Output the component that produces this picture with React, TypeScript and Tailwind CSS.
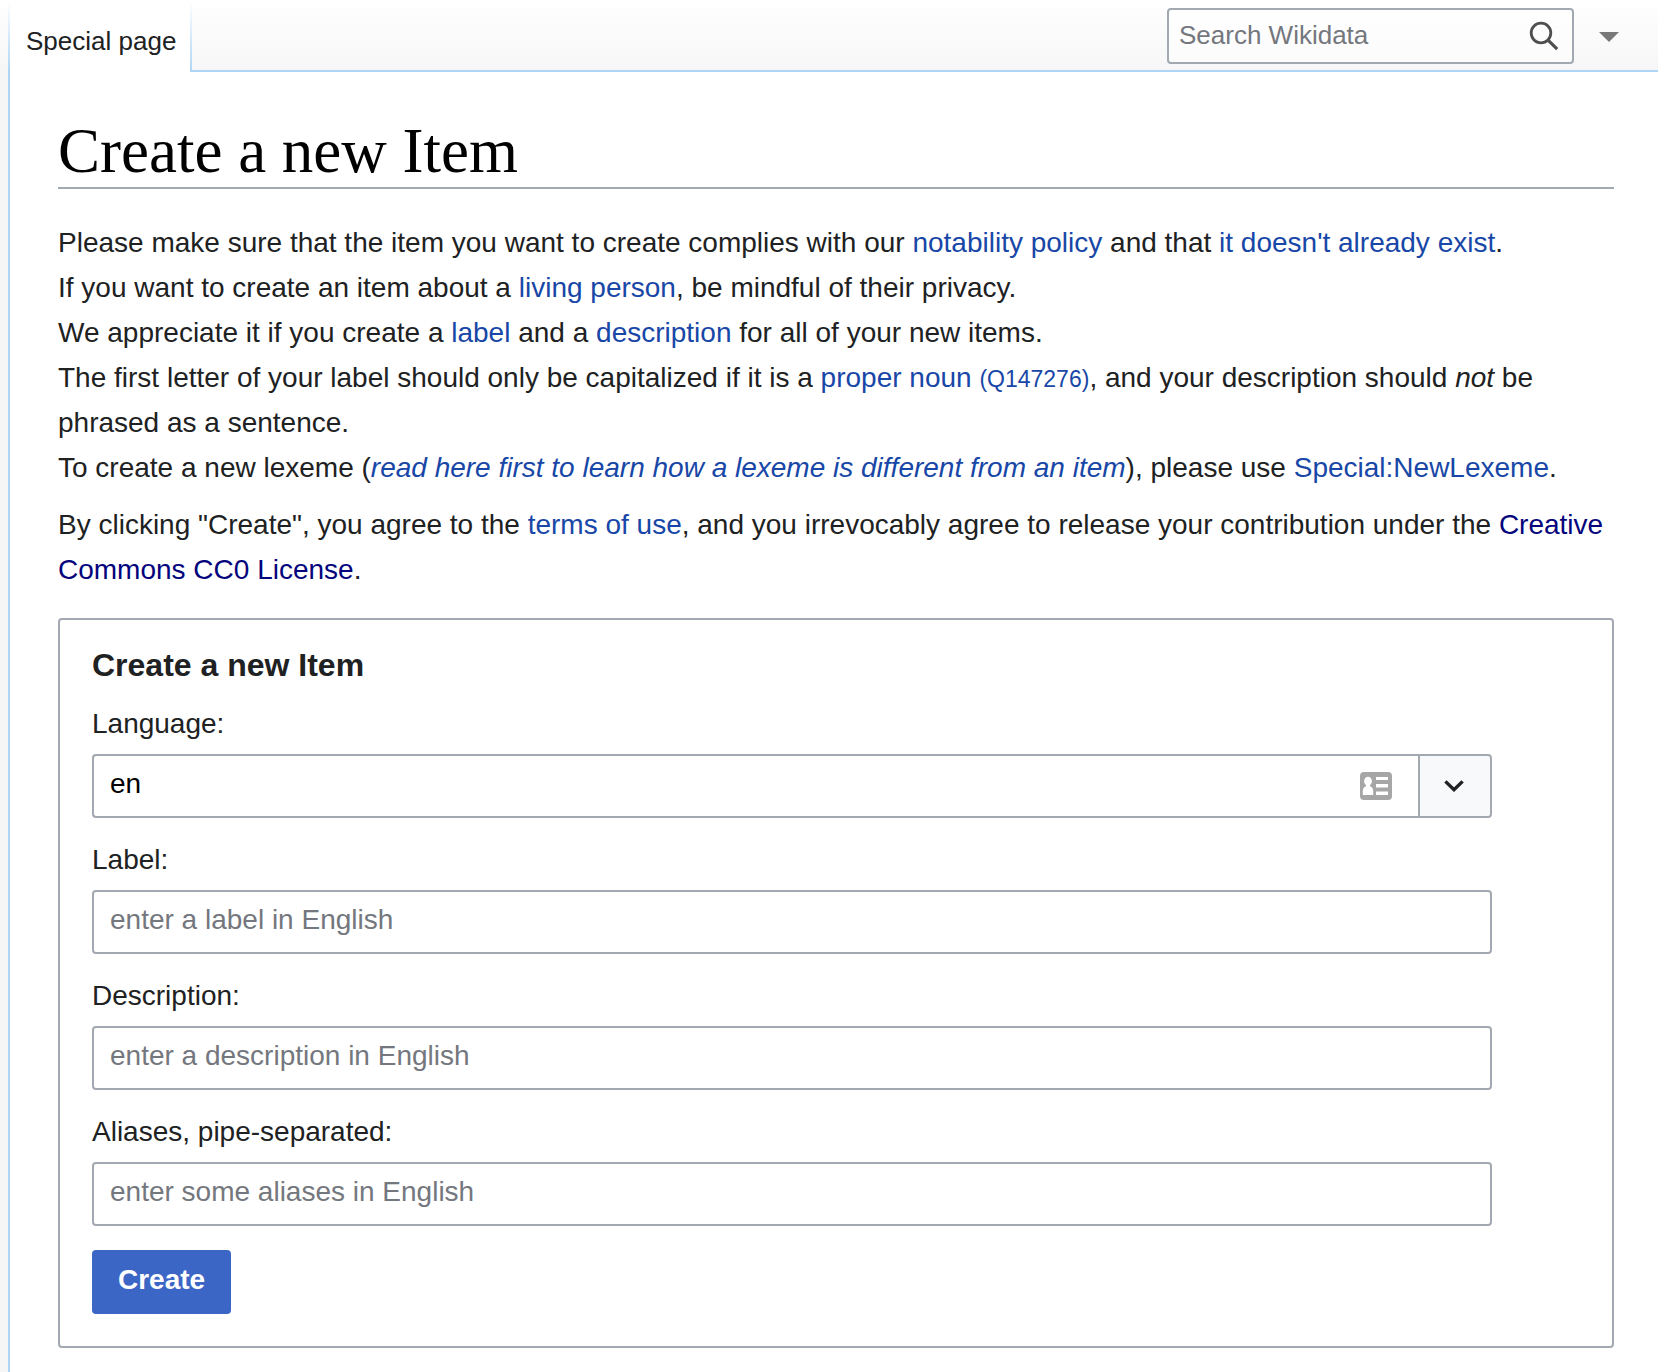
import type { ReactNode } from 'react';

function Link({ children }: { children: ReactNode }) {
  return (
    <a href="#" className="text-[#1847a7] hover:underline">
      {children}
    </a>
  );
}

function ExternalLink({ children }: { children: ReactNode }) {
  return (
    <a href="#" className="text-[#04047c] hover:underline">
      {children}
    </a>
  );
}

const inputClass =
  'block h-16 w-full rounded-[4px] border-2 border-[#a2a9b1] bg-white px-4 pb-1 text-[28px] text-black outline-none placeholder:text-[#74777d]';

function TextField({ id, label, placeholder }: { id: string; label: string; placeholder: string }) {
  return (
    <div className="flex flex-col gap-2">
      <label htmlFor={id} className="leading-[44px]">
        {label}
      </label>
      <input id={id} type="text" placeholder={placeholder} className={inputClass} />
    </div>
  );
}

function LanguageField() {
  return (
    <div className="flex flex-col gap-2">
      <label htmlFor="language" className="leading-[44px]">
        Language:
      </label>
      <div className="flex">
        <div className="relative min-w-0 flex-1">
          <input id="language" type="text" defaultValue="en" className={`${inputClass} rounded-r-none border-r-0`} />
          <svg
            viewBox="0 0 32 28"
            className="pointer-events-none absolute top-[18px] right-[26px] h-7 w-8"
            aria-hidden="true"
          >
            <rect width="32" height="28" rx="4" fill="#a6a6a6" />
            <ellipse cx="8" cy="9.2" rx="3.9" ry="4.4" fill="#fff" />
            <path d="M6 12h4v2.2c2.2.8 3.2 2.300 3.200 5V23H2.800v-3.800c0-2.700 1-4.200 3.200-5z" fill="#fff" />
            <path d="M16 5h12v3H16zM16 12h12v3.500H16zM16 19.500h12V23H16z" fill="#fff" />
          </svg>
        </div>
        <button
          type="button"
          aria-label="Choose a language"
          className="flex h-16 w-[74px] items-center justify-center rounded-r-[4px] border-2 border-[#a2a9b1] bg-[#f8f9fa] pr-0.5"
        >
          <svg viewBox="0 0 20 12" className="h-3 w-5" aria-hidden="true">
            <path d="M1.400 1.400 10 9.700l8.600-8.300" fill="none" stroke="#202122" strokeWidth="3.400" />
          </svg>
        </button>
      </div>
    </div>
  );
}

function Header() {
  return (
    <header className="flex h-[72px] bg-linear-to-b from-white to-[#f6f6f6]">
      <nav className="flex bg-white">
        <a href="#" className="flex items-center pt-2.5 pr-3.5 pl-4 text-[26px] leading-8 text-[#202122]">
          Special page
        </a>
        <div className="w-0.5 bg-linear-to-b from-white to-[#aed5f5]" />
      </nav>
      <div className="flex flex-1 items-start justify-end border-b-2 border-[#aed5f5] pt-2 pr-[39px]">
        <form role="search" className="flex h-14 w-[407px] rounded-[4px] border-2 border-[#a2a9b1] bg-white/50">
          <input
            type="search"
            aria-label="Search Wikidata"
            placeholder="Search Wikidata"
            className="min-w-0 flex-1 bg-transparent pb-0.5 pl-2.5 text-[26px] outline-none placeholder:text-[#74777d]"
          />
          <button type="button" aria-label="Search" className="flex w-14 items-center justify-center">
            <svg viewBox="0 0 30 30" className="h-[30px] w-[30px]" aria-hidden="true">
              <circle cx="12" cy="12" r="9.800" fill="none" stroke="#4f4f4f" strokeWidth="2.800" />
              <path d="m18.800 18.800 9.400 9.400" stroke="#4f4f4f" strokeWidth="3.200" />
            </svg>
          </button>
        </form>
        <button type="button" aria-label="More" className="ml-[25px] flex h-14 items-center pt-0.5">
          <svg viewBox="0 0 20 10" className="h-2.5 w-5" aria-hidden="true">
            <path d="M0 0h20L10 10z" fill="#797979" />
          </svg>
        </button>
      </div>
    </header>
  );
}

export default function App() {
  return (
    <div className="flex min-h-screen bg-white font-['Liberation_Sans',Arial,sans-serif] text-[28px] leading-[45px] text-[#202122]">
      <div className="flex w-2.5 shrink-0 bg-[#f6f6f6]">
        <div className="h-[72px] flex-1 bg-linear-to-b from-white to-[#f6f6f6]" />
        <div className="w-0.5 bg-linear-to-b from-white to-[#aed5f5] to-[72px]" />
      </div>
      <div className="min-w-0 flex-1">
        <Header />
        <main className="pt-11 pr-11 pb-6 pl-12">
          <h1 className="border-b-2 border-[#a2a9b1] pb-px font-['Liberation_Serif',serif] text-[63px] leading-[70px] text-black">
            Create a new Item
          </h1>
          <div className="mt-[31px]">
            <p>
              Please make sure that the item you want to create complies with our <Link>notability policy</Link> and
              that <Link>it doesn't already exist</Link>.
            </p>
            <p>
              If you want to create an item about a <Link>living person</Link>, be mindful of their privacy.
            </p>
            <p>
              We appreciate it if you create a <Link>label</Link> and a <Link>description</Link> for all of your new
              items.
            </p>
            <p>
              The first letter of your label should only be capitalized if it is a{' '}
              <Link>
                proper noun <span className="text-[23px] leading-none">(Q147276)</span>
              </Link>
              , and your description should <i>not</i> be phrased as a sentence.
            </p>
            <p>
              To create a new lexeme (
              <i>
                <Link>read here first to learn how a lexeme is different from an item</Link>
              </i>
              ), please use <Link>Special:NewLexeme</Link>.
            </p>
            <p className="mt-3">
              By clicking "Create", you agree to the <Link>terms of use</Link>, and you irrevocably agree to release
              your contribution under the <ExternalLink>Creative Commons CC0 License</ExternalLink>.
            </p>
          </div>
          <form className="mt-[26px] rounded-[4px] border-2 border-[#a2a9b1] p-8 pt-6">
            <h2 className="mb-4 text-[32px] leading-[42px] font-bold">Create a new Item</h2>
            <div className="flex max-w-[1400px] flex-col gap-5">
              <LanguageField />
              <TextField id="label" label="Label:" placeholder="enter a label in English" />
              <TextField id="description" label="Description:" placeholder="enter a description in English" />
              <TextField id="aliases" label="Aliases, pipe-separated:" placeholder="enter some aliases in English" />
            </div>
            <button
              type="button"
              className="mt-6 flex h-16 items-center rounded-[4px] bg-[#3c66c5] px-[26px] pb-1.5 font-bold text-white"
            >
              Create
            </button>
          </form>
        </main>
      </div>
    </div>
  );
}
